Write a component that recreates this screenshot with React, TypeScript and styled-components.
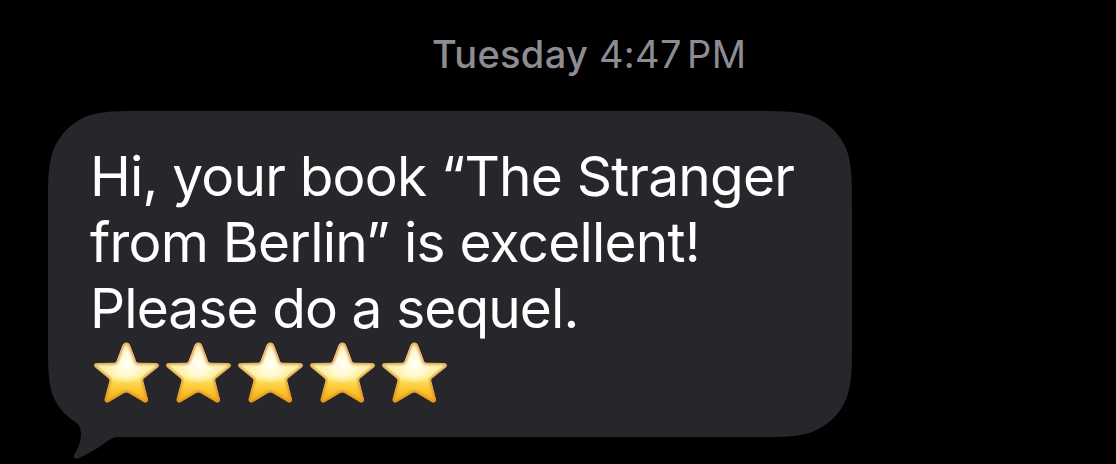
import { FC } from 'react';
import styled, { createGlobalStyle } from 'styled-components';

const GlobalStyle = createGlobalStyle`
   * {
      box-sizing: border-box;
   }

   body {
      margin: 0;
      background: #000;
      overflow: hidden;
   }
`;

const Conversation = styled.main`
   display: flex;
   flex-direction: column;
   height: 464px;
   padding: 30px 0 0 48px;
   background: #000;
   font-family: Inter, 'Liberation Sans', sans-serif;
`;

const Timestamp = styled.time`
   display: flex;
   height: 48px;
   margin-left: 384px;
   color: #8d8c93;
   font-size: 38px;
   line-height: 48px;
   white-space: pre;
`;

const Day = styled.span`
   width: 167px;
   font-weight: 500;
   letter-spacing: 0.3px;
`;

const Hour = styled.span`
   width: 88px;
   letter-spacing: 0.3px;
`;

const Meridiem = styled.span`
   letter-spacing: 0.4px;
`;

// rounded bubble with continuous corners and a tail at the lower left
const Bubble = styled.article`
   width: 804px;
   height: 349px;
   margin-top: 33px;
   padding: 32px 42px 0;
   background: #27262b;
   color: #fff;
   clip-path: path('M98 0 H706 C734.3 0 748.4 0 763.6 4.8 C780.1 10.8 793.2 23.9 799.2 40.4 C804 55.6 804 69.7 804 98 V228 C804 256.3 804 270.4 799.2 285.6 C793.2 302.1 780.1 315.2 763.6 321.2 C748.4 326 734.3 326 706 326 H73 C68 326 65 326.5 61 329 C52 336 42 342 31 347 C27 348.5 25 347 26 344 C30 338 33 331 33 323 C33 314 29 312 23 308 C14 301 9 294 5 285 C0 270.4 0 256.3 0 228 V98 C0 69.7 0 55.6 4.8 40.4 C10.8 23.9 23.9 10.8 40.4 4.8 C55.6 0 69.7 0 98 0 Z');
`;

const Line = styled.div<{ $spacing: number }>`
   height: 66px;
   font-size: 55px;
   line-height: 66px;
   letter-spacing: ${({ $spacing }) => $spacing}px;
   white-space: nowrap;
`;

const Stars = styled.div`
   display: flex;
   gap: 4px;
   height: 66px;
   margin-top: -2px;
   padding-left: 4px;
`;

const StarIcon = styled.svg`
   width: 68px;
   height: 66px;
   flex: none;
`;

const STAR = 'M32.3 3.5 Q35 3.5 36.2 6.5 L42.3 22.8 Q43 23.8 44.5 23.8 L62 24 Q66.5 24.8 64 28.3 L50 39.5 Q49 40.5 49.3 42 L54 60 Q54.3 64.2 50.5 63.5 L34 53.8 Q32.3 53 30.6 53.8 L14.1 63.5 Q10.3 64.2 10.6 60 L15.4 42 Q15.6 40.5 14.6 39.5 L1 28.3 Q-1.5 24.8 2.7 24 L20.2 23.8 Q21.7 23.8 22.3 22.8 L28.4 6.5 Q29.6 3.5 32.3 3.5 Z';

const Star: FC = () => (
   <StarIcon viewBox="0 0 68 66" aria-label="star">
      <defs>
         <linearGradient id="body" x1="0" y1="0" x2="0" y2="1">
            <stop offset="0" stopColor="#fbdc91" />
            <stop offset="0.35" stopColor="#fff3bb" />
            <stop offset="0.57" stopColor="#fff1a0" />
            <stop offset="0.67" stopColor="#fbd84b" />
            <stop offset="0.83" stopColor="#fbc02c" />
            <stop offset="1" stopColor="#f2a820" />
         </linearGradient>
         <linearGradient id="rim" x1="0" y1="0" x2="0" y2="1">
            <stop offset="0" stopColor="#e8ad60" />
            <stop offset="0.45" stopColor="#e0a84a" />
            <stop offset="1" stopColor="#e4941c" />
         </linearGradient>
         <radialGradient id="shine" gradientUnits="userSpaceOnUse" cx="32.5" cy="24" r="21">
            <stop offset="0" stopColor="#fffff4" />
            <stop offset="0.6" stopColor="#fffbdc" stopOpacity="0.8" />
            <stop offset="1" stopColor="#fff3b0" stopOpacity="0" />
         </radialGradient>
         <clipPath id="edge">
            <path d={STAR} />
         </clipPath>
         <filter id="soft">
            <feGaussianBlur stdDeviation="1" />
         </filter>
      </defs>
      <g clipPath="url(#edge)">
         <path d={STAR} fill="url(#body)" />
         <path d={STAR} fill="url(#shine)" />
         <path d={STAR} fill="none" stroke="url(#rim)" strokeWidth="4" filter="url(#soft)" />
      </g>
   </StarIcon>
);

const App: FC = () => (
   <>
      <GlobalStyle />
      <Conversation>
         <Timestamp>
            <Day>Tuesday</Day>
            <Hour>4:47</Hour>
            <Meridiem>PM</Meridiem>
         </Timestamp>
         <Bubble>
            <Line $spacing={-0.81}>Hi, your book “The Stranger</Line>
            <Line $spacing={-0.78}>from Berlin” is excellent!</Line>
            <Line $spacing={-0.9}>Please do a sequel.</Line>
            <Stars>
               {[1, 2, 3, 4, 5].map((n) => <Star key={n} />)}
            </Stars>
         </Bubble>
      </Conversation>
   </>
);

export default App;
